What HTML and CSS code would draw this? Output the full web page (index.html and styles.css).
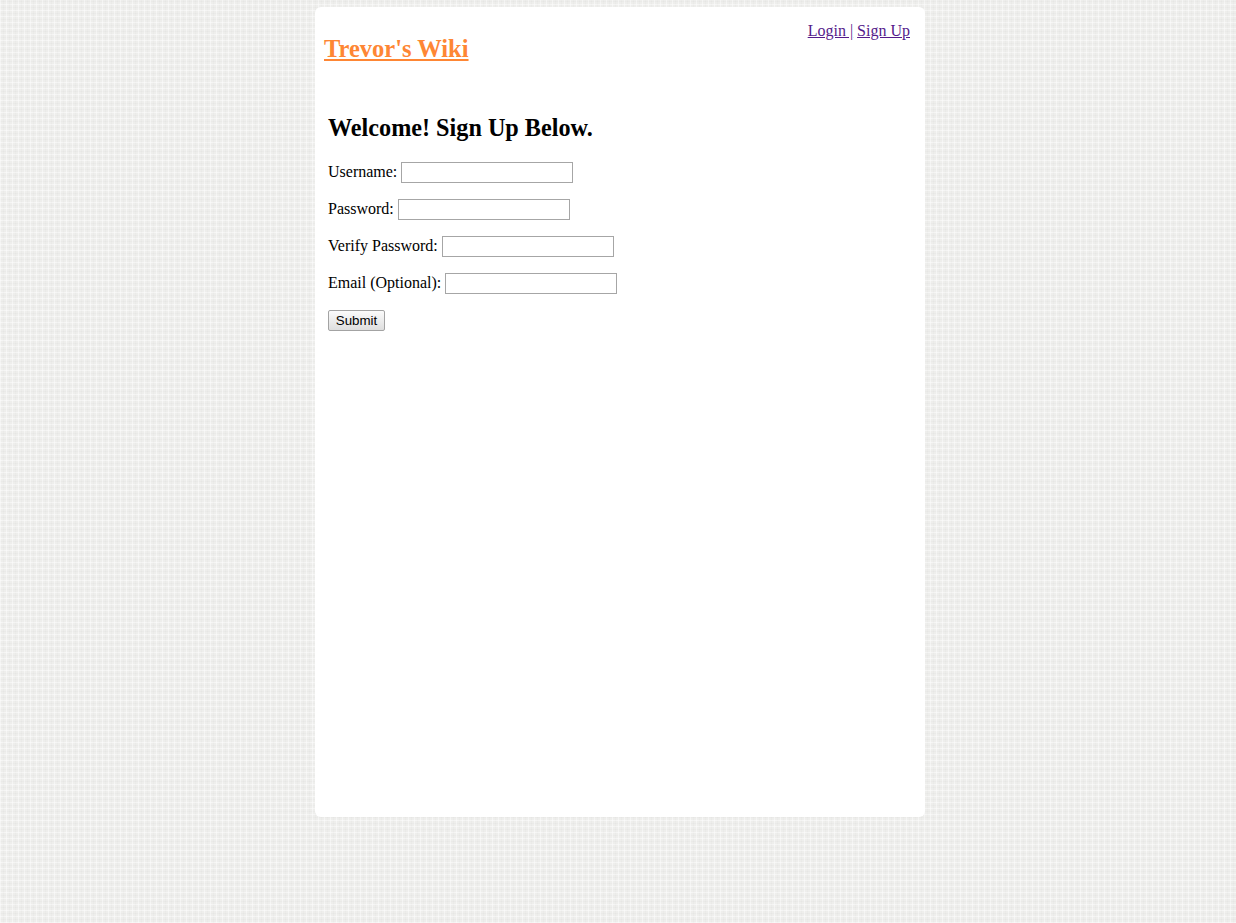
FILE: index.html
```html
<!DOCTYPE html>
<html>
<head>
<meta charset="utf-8">
<title>Trevor's Wiki - Sign Up</title>
<link rel="stylesheet" href="styles.css">
</head>
<body>
<div class="page">
  <div class="header">
    <h2 class="site-title"><a href="#" class="title-link">Trevor's Wiki</a></h2>
    <div class="nav"><a href="#" class="nav-link">Login |</a> <a href="#" class="nav-link">Sign Up</a></div>
  </div>
  <div class="content">
    <h2 class="heading">Welcome! Sign Up Below.</h2>
    <form class="signup">
      <p class="row">Username: <input type="text" class="field"></p>
      <p class="row">Password: <input type="password" class="field"></p>
      <p class="row">Verify Password: <input type="password" class="field"></p>
      <p class="row">Email (Optional): <input type="text" class="field"></p>
      <p class="row"><button type="button" class="submit">Submit</button></p>
    </form>
  </div>
</div>
</body>
</html>
```

FILE: styles.css
```css
html, body {
  margin: 0;
  padding: 0;
}

body {
  font-family: "Liberation Serif", "Times New Roman", serif;
  font-size: 16px;
  color: #000;
  background-color: #eeeeec;
  background-image:
    repeating-linear-gradient(90deg, rgba(255,255,255,0.45) 0 1px, transparent 1px 3px, rgba(0,0,0,0.015) 3px 4px, transparent 4px 6px),
    repeating-linear-gradient(0deg, rgba(255,255,255,0.45) 0 1px, transparent 1px 3px, rgba(0,0,0,0.015) 3px 4px, transparent 4px 6px);
  min-height: 923px;
  padding-top: 7px;
  box-sizing: border-box;
}

.page {
  width: 610px;
  height: 810px;
  margin: 0 0 0 calc(50% - 303px);
  background: #fff;
  border-radius: 6px;
}

.header {
  display: flex;
  justify-content: space-between;
  align-items: flex-start;
  padding: 15px 15px 0 9px;
}

.site-title {
  margin: 13.3px 0 0 0;
  font-size: 24.5px;
  font-weight: bold;
}

.title-link {
  color: #fe8634;
}

.nav {
  font-size: 16px;
}

.nav-link {
  color: #551a8b;
}

.content {
  padding: 0 13px;
}

.heading {
  margin: 51px 0 19.5px 0;
  font-size: 24.2px;
  font-weight: bold;
}

.signup {
  margin: 0;
}

.row {
  margin: 16px 0;
}

.field {
  width: 172px;
  height: 21px;
  box-sizing: border-box;
  border: 1px solid #a6a6a6;
  padding: 1px 2px;
  font-family: "Liberation Sans", Arial, sans-serif;
  font-size: 13.33px;
  vertical-align: baseline;
  margin: 0;
}

.submit {
  font-family: "Liberation Sans", Arial, sans-serif;
  font-size: 13.33px;
  height: 21px;
  width: 57px;
  padding: 0;
  border: 1px solid #a3a3a3;
  border-radius: 2px;
  background: linear-gradient(#fbfbfb, #dedede);
  color: #000;
  margin: 0;
}
```
